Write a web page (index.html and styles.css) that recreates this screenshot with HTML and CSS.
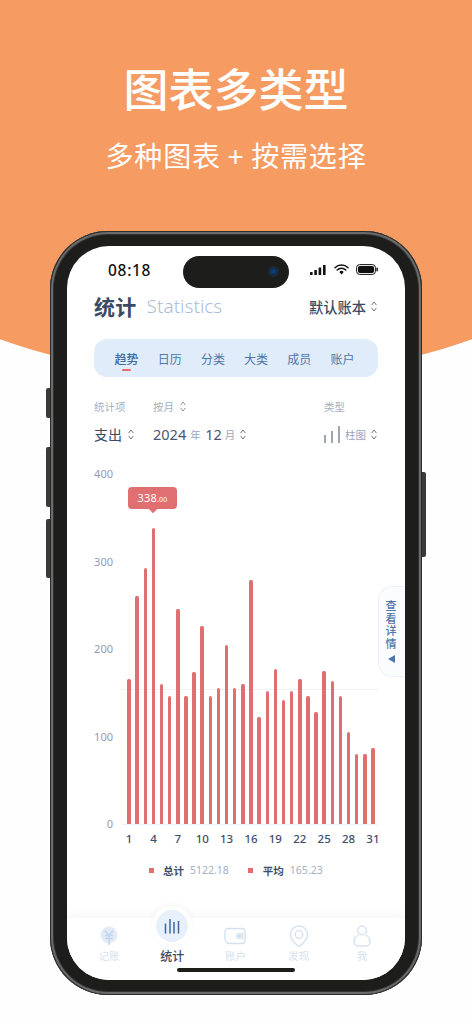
FILE: index.html
```html
<!DOCTYPE html>
<html lang="zh">
<head>
<meta charset="utf-8">
<title>统计</title>
<link rel="stylesheet" href="styles.css">
</head>
<body>
<div class="page">
  <div class="arc"></div>
  <header class="hero">
    <h1 class="hero-title">图表多类型</h1>
    <p class="hero-sub">多种图表 + 按需选择</p>
  </header>
  <svg class="defs" width="0" height="0"><symbol id="chev" viewBox="0 0 6 11"><path d="M.8 3.800 3 1l2.200 2.800M.8 7.200 3 10l2.200-2.800" fill="none" stroke="currentColor" stroke-width=".9" stroke-linecap="round" stroke-linejoin="round"/></symbol></svg>
  <div class="phone">
    <i class="btn btn-a"></i><i class="btn btn-b"></i><i class="btn btn-c"></i><i class="btn btn-d"></i>
    <div class="screen">
      <div class="island"><span class="cam"></span></div>
      <div class="status">
        <span class="time">08:18</span>
        <span class="status-icons">
          <svg width="16" height="10" viewBox="0 0 16 10"><rect x="0" y="7" width="2.600" height="3" rx=".5"/><rect x="4.300" y="5" width="2.600" height="5" rx=".5"/><rect x="8.600" y="2.500" width="2.600" height="7.500" rx=".5"/><rect x="13" y="0" width="2.600" height="10" rx=".5"/></svg>
          <svg width="15" height="11" viewBox="0 0 15 11"><path d="M1 3.800a9.200 9.200 0 0 1 13 0M3.200 6a6.100 6.100 0 0 1 8.600 0" fill="none" stroke="#111" stroke-width="1.500" stroke-linecap="round"/><path d="M5.300 7.900a3.100 3.100 0 0 1 4.400 0L7.500 10.400z"/></svg>
          <svg width="22" height="11" viewBox="0 0 22 11"><rect x=".6" y=".6" width="18.800" height="9.800" rx="3" fill="none" stroke="#111" stroke-width="1"/><rect x="2" y="2" width="16" height="7" rx="1.800"/><rect x="20.400" y="3.600" width="1.400" height="3.800" rx=".7"/></svg>
        </span>
      </div>

      <div class="head">
        <span class="head-title">统计</span>
        <span class="head-en">Statistics</span>
        <span class="head-book">默认账本<svg class="chev"><use href="#chev"/></svg></span>
      </div>

      <nav class="tabs">
        <span class="tab tab-on">趋势</span>
        <span class="tab">日历</span>
        <span class="tab">分类</span>
        <span class="tab">大类</span>
        <span class="tab">成员</span>
        <span class="tab">账户</span>
      </nav>

      <div class="filters">
        <span class="f-label">统计项</span>
        <span class="f-label">按月<svg class="chev chev-m"><use href="#chev"/></svg></span>
        <span class="f-label">类型</span>
        <span class="f-val">支出<svg class="chev chev-m"><use href="#chev"/></svg></span>
        <span class="f-val f-date">2024<small>年</small>12<small class="last">月</small><svg class="chev"><use href="#chev"/></svg></span>
        <span class="f-val f-type">
          <svg class="type-ico" width="16" height="17" viewBox="0 0 16 17"><path d="M1 9v8M8 5v12M15 0v17" stroke="#4f5e78" stroke-width="1.100"/></svg>
          <small>柱图</small><svg class="chev chev-m"><use href="#chev"/></svg>
        </span>
      </div>

      <section class="chart">
        <div class="y-axis"><span>400</span><span>300</span><span>200</span><span>100</span><span>0</span></div>
        <div class="plot">
          <div class="avg"></div>
          <div class="tooltip">338<small>.00</small></div>
          <div class="bars">
            <i style="height:145px"></i><i style="height:228px"></i><i style="height:256px"></i><i style="height:296px"></i><i style="height:140px"></i><i style="height:128px"></i><i style="height:215px"></i><i style="height:128px"></i><i style="height:152px"></i><i style="height:198px"></i><i style="height:128px"></i><i style="height:136px"></i><i style="height:179px"></i><i style="height:136px"></i><i style="height:140px"></i><i style="height:244px"></i><i style="height:107px"></i><i style="height:133px"></i><i style="height:155px"></i><i style="height:124px"></i><i style="height:133px"></i><i style="height:145px"></i><i style="height:128px"></i><i style="height:112px"></i><i style="height:153px"></i><i style="height:143px"></i><i style="height:128px"></i><i style="height:92px"></i><i style="height:70px"></i><i style="height:70px"></i><i style="height:76px"></i>
          </div>
        </div>
        <div class="x-axis">
          <span>1</span><span></span><span></span><span>4</span><span></span><span></span><span>7</span><span></span><span></span><span>10</span><span></span><span></span><span>13</span><span></span><span></span><span>16</span><span></span><span></span><span>19</span><span></span><span></span><span>22</span><span></span><span></span><span>25</span><span></span><span></span><span>28</span><span></span><span></span><span>31</span>
        </div>
      </section>

      <div class="legend">
        <i class="dot"></i><b>总计</b><span>5122.18</span>
        <i class="dot dot-2"></i><b>平均</b><span>165.23</span>
      </div>

      <div class="drawer"><span>查看详情</span><i class="tri"></i></div>

      <footer class="nav">
        <div class="hump"></div>
        <div class="nav-item">
          <svg class="nav-ico" width="24" height="24" viewBox="0 0 24 24"><circle cx="12" cy="11" r="8.500" fill="#e2ebf6"/><path d="M8 6.500l4 5 4-5M8 11.500h8M8 14.500h8M12 11.500V21" fill="none" stroke="#c4d6ec" stroke-width="1.600"/></svg>
          <span>记账</span>
        </div>
        <div class="nav-item nav-on">
          <div class="nav-bubble"><svg width="16" height="16" viewBox="0 0 16 16"><path d="M1.500 5.500V15.500M6 1V15.500M10 4V15.500M14.500 3V15.500" fill="none" stroke="#3f6a9e" stroke-width="1.500"/></svg></div>
          <span>统计</span>
        </div>
        <div class="nav-item">
          <svg class="nav-ico" width="24" height="24" viewBox="0 0 24 24"><path d="M5 4.500h14a3 3 0 0 1 3 3v9a3 3 0 0 1-3 3H6.500A4.500 4.500 0 0 1 2 15V7.500a3 3 0 0 1 3-3z" fill="none" stroke="#d3e0f0" stroke-width="1.300"/><path d="M22 8.500h-6a3.500 3.500 0 0 0 0 7h6z" fill="#e2ebf6"/><circle cx="16.500" cy="12" r="1.300" fill="#c4d6ec"/></svg>
          <span>账户</span>
        </div>
        <div class="nav-item">
          <svg class="nav-ico" width="24" height="24" viewBox="0 0 24 24"><path d="M12 22.500C7 19 3.500 15.500 3.500 10.500a8.500 8.500 0 0 1 17 0c0 5-3.500 8.500-8.500 12z" fill="none" stroke="#d3e0f0" stroke-width="1.300"/><circle cx="12" cy="10.500" r="3.800" fill="none" stroke="#d3e0f0" stroke-width="1.300"/></svg>
          <span>发现</span>
        </div>
        <div class="nav-item">
          <svg class="nav-ico" width="24" height="24" viewBox="0 0 24 24"><circle cx="12" cy="6.500" r="4.300" fill="none" stroke="#d3e0f0" stroke-width="1.300"/><path d="M8.500 11C5 12.500 4 15 4 18c0 2 1.500 4 4 4h8c2.500 0 4-2 4-4 0-3-1-5.500-4.500-7" fill="none" stroke="#d3e0f0" stroke-width="1.300"/></svg>
          <span>我</span>
        </div>
        <div class="home"></div>
      </footer>
    </div>
  </div>
</div>
</body>
</html>
```
FILE: styles.css
```css
* { box-sizing: border-box; }
html, body { margin: 0; padding: 0; background: #fff; }
body { font-family: "Noto Sans", "Noto Sans CJK SC", sans-serif; }
.page { position: relative; width: 472px; height: 1024px; overflow: hidden; background: #fefefe; display: flex; flex-direction: column; align-items: center; }
.arc { position: absolute; left: -467px; top: -1026px; width: 1406px; height: 1406px; border-radius: 50%; background: #f69b62; }
.defs { position: absolute; }

.hero { position: relative; text-align: center; color: #fff; font-family: "Noto Sans CJK SC", sans-serif; padding-top: 56px; height: 231px; }
.hero-title { margin: 0; font-size: 45px; line-height: 64px; font-weight: 500; }
.hero-sub { margin: 17px 0 0; font-size: 28px; line-height: 36px; letter-spacing: .8px; font-weight: 400; white-space: nowrap; }

.phone { position: relative; width: 372px; height: 764px; padding: 15px 17px; border-radius: 58px; background: #1d1d1b; box-shadow: inset 0 0 0 1px #2b2b2b, inset 0 0 0 3px #6a6a6a, inset 0 0 0 4px #333; }
.btn { position: absolute; width: 4px; background: #3a3a38; }
.btn-a { left: -4px; top: 157px; height: 30px; border-radius: 2px 0 0 2px; }
.btn-b { left: -4px; top: 216px; height: 60px; border-radius: 2px 0 0 2px; }
.btn-c { left: -4px; top: 288px; height: 59px; border-radius: 2px 0 0 2px; }
.btn-d { right: -4px; top: 241px; height: 85px; border-radius: 0 2px 2px 0; }

.screen { position: relative; height: 734px; border-radius: 42px; background: #fff; overflow: hidden; display: flex; flex-direction: column; padding: 0 27px; color: #3b4a63; font-family: "Noto Sans CJK SC", sans-serif; }
.island { position: absolute; left: 116px; top: 10px; width: 106px; height: 32px; border-radius: 16px; background: #1d1d1b; }
.cam { position: absolute; left: 85px; top: 10px; width: 11px; height: 11px; border-radius: 50%; background: #1b2a3d; }
.cam::after { content: ""; position: absolute; left: 3px; top: 3px; width: 5px; height: 5px; border-radius: 50%; background: #0c3c7c; }

.status { height: 47px; flex: none; display: flex; align-items: center; justify-content: space-between; margin: 0 0 0 14px; }
.time { font-family: "Noto Sans", sans-serif; font-size: 15.500px; font-weight: 500; color: #111; letter-spacing: .7px; }
.status-icons { display: flex; align-items: center; gap: 7.500px; fill: #111; }

.head { height: 26px; flex: none; display: flex; align-items: center; }
.head-title { font-size: 21px; font-weight: 700; letter-spacing: .3px; }
.head-en { margin-left: 10px; font-family: "Noto Sans", sans-serif; font-size: 19px; font-weight: 300; color: #adbcd6; }
.head-book { margin-left: auto; padding-right: 1px; display: flex; align-items: center; font-size: 14.250px; font-weight: 500; gap: 5px; }
.chev { width: 6px; height: 11px; color: #5d6a80; flex: none; }
.chev-m { margin-left: 6px; }

.tabs { height: 38px; flex: none; margin-top: 20px; padding: 0 14px 0 11px; display: flex; background: #e0ecfa; border-radius: 13px; }
.tab { position: relative; flex: 1; display: flex; align-items: center; justify-content: center; font-size: 12px; color: #4f76a8; }
.tab-on { color: #3f6a9e; font-weight: 500; }
.tab-on::after { content: ""; position: absolute; left: 50%; bottom: 6px; width: 9px; height: 2px; margin-left: -5px; background: #e86a6a; border-radius: 1px; }

.filters { flex: none; margin-top: 21px; display: grid; grid-template-columns: 59px 1fr 54px; grid-template-rows: 16px 22px; row-gap: 9px; align-items: center; }
.f-label { display: flex; align-items: center; font-size: 10.500px; color: #a5aec0; white-space: nowrap; }
.f-label .chev { color: #7b8699; }
.f-val { display: flex; align-items: center; font-size: 14px; color: #3b4a63; white-space: nowrap; }
.f-date { font-family: "Noto Sans", sans-serif; font-size: 14.500px; color: #4a5670; }
.f-date small, .f-type small { font-family: "Noto Sans CJK SC", sans-serif; font-size: 10.500px; color: #9aa5bc; margin: 0 4.500px 0 4px; }
.f-date small.last { margin: 0 5px 0 3px; }
.f-type small { margin: 0 0 0 5px; }
.f-type .chev-m { margin-left: 5px; }
.type-ico { flex: none; }

.chart { flex: none; margin-top: 29px; display: grid; grid-template-columns: 19px 252px; column-gap: 12px; grid-template-rows: 350px 14px; row-gap: 8px; }
.y-axis { margin: -7px 0; display: flex; flex-direction: column; justify-content: space-between; align-items: flex-end; font-family: "Noto Sans", sans-serif; font-size: 11px; line-height: 14px; color: #939cb3; }
.plot { position: relative; margin: 0 -1px 0 -3px; padding: 0 1px 0 3px; }
.plot::after { content: ""; position: absolute; left: 0; right: 0; bottom: -1px; height: 1px; background: #eef2fa; }
.bars { position: relative; height: 100%; display: grid; grid-template-columns: repeat(31, 1fr); align-items: end; justify-items: center; }
.bars i { display: block; width: 3.500px; background: #e06f71; border-radius: 1.500px 1.500px 0 0; }
.avg { position: absolute; left: 0; right: 0; bottom: 134px; height: 1px; background: #f1f1f3; }
.tooltip { position: absolute; left: 6px; top: 13px; width: 49px; height: 22px; border-radius: 4px; background: #e06f71; color: #fff; font-family: "Noto Sans", sans-serif; font-size: 11px; line-height: 22px; text-align: center; letter-spacing: .2px; }
.tooltip small { font-size: 7px; }
.tooltip::after { content: ""; position: absolute; left: 50%; bottom: -3px; width: 6px; height: 6px; margin-left: -3px; background: #e06f71; transform: rotate(45deg); }
.x-axis { grid-column: 2; display: grid; grid-template-columns: repeat(31, 1fr); justify-items: center; font-family: "Noto Sans", sans-serif; font-size: 11.500px; line-height: 14px; font-weight: 500; color: #3f4d66; }
.x-axis span { white-space: nowrap; display: flex; justify-content: center; width: 8px; }

.legend { flex: none; margin-top: 16px; height: 16px; padding-left: 55px; display: flex; align-items: center; font-size: 10.500px; }
.legend .dot { width: 5px; height: 5px; background: #e06f71; margin-right: 9px; }
.legend .dot-2 { margin-left: 19px; margin-right: 10px; }
.legend b { font-weight: 700; color: #3f4d66; margin-right: 6px; }
.legend span { font-family: "Noto Sans", sans-serif; font-size: 10.500px; color: #a6afc3; }

.drawer { position: absolute; right: 0; top: 340px; width: 27px; height: 91px; padding: 12px 2px 0 0; border: 1px solid #eef1f8; border-right: 0; border-radius: 14px 0 0 14px; background: #fbfcfe; display: flex; flex-direction: column; align-items: center; gap: 6px; }
.drawer span { width: 11px; font-size: 11px; line-height: 12.600px; font-weight: 500; color: #4f76a8; text-align: center; }
.tri { width: 0; height: 0; border-style: solid; border-width: 4.500px 7px 4.500px 0; border-color: transparent #4f76a8 transparent transparent; }

.nav { position: relative; flex: none; margin: auto -27px 0; height: 62px; padding: 0 11.500px 0 10.500px; display: grid; grid-template-columns: repeat(5, 1fr); background: #fff; box-shadow: 0 -4px 10px rgba(0, 0, 0, .035); }
.hump { position: absolute; left: 85px; top: -12px; width: 40px; height: 40px; border-radius: 50%; background: #fff; box-shadow: 0 -2px 6px rgba(0, 0, 0, .03); }
.nav-item { position: relative; display: flex; flex-direction: column; align-items: center; padding-top: 6px; font-size: 10.500px; line-height: 16px; color: #d5e2f1; }
.nav-ico { flex: none; margin-bottom: 0; }
.nav-on { color: #3b4a63; font-size: 12px; font-weight: 500; padding-top: 30px; }
.nav-bubble { position: absolute; top: -8px; left: 50%; margin-left: -16px; width: 32px; height: 32px; border-radius: 50%; background: #e8f1fb; display: flex; align-items: center; justify-content: center; }
.home { position: absolute; left: 110px; bottom: 8px; width: 118px; height: 4px; border-radius: 2px; background: #1d1d1b; }
```
